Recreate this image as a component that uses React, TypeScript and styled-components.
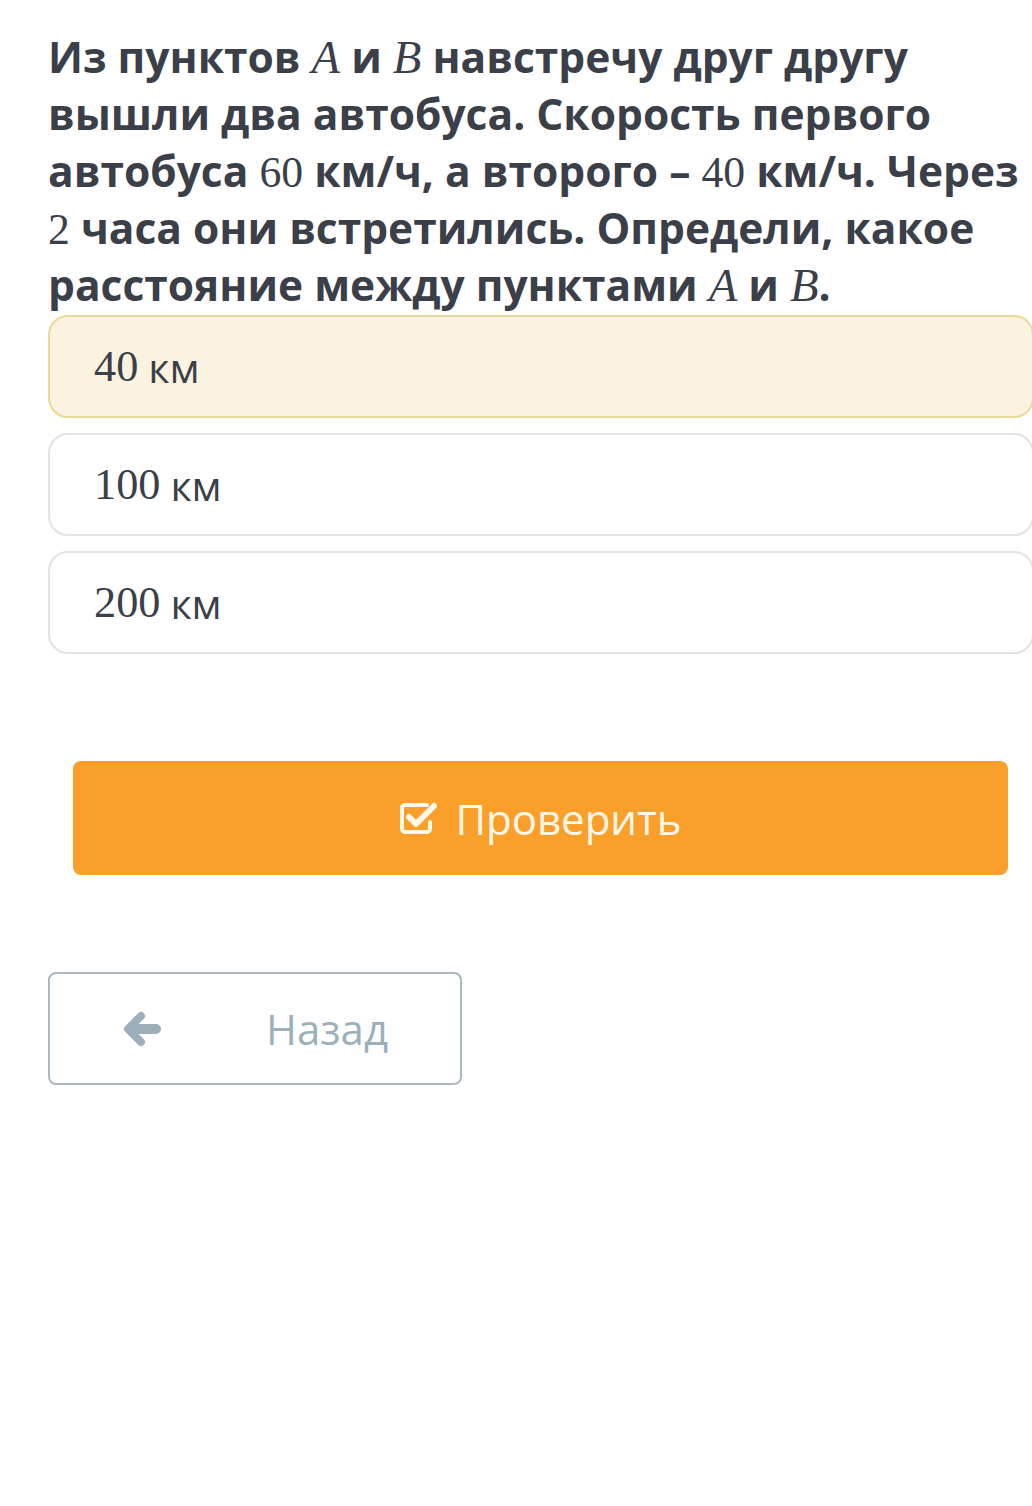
import React, { useState } from "react";
import styled, { createGlobalStyle } from "styled-components";

const GlobalStyle = createGlobalStyle`
  html, body {
    margin: 0;
    padding: 0;
    background: #ffffff;
    overflow-x: hidden;
  }
`;

const Page = styled.div`
  width: 1032px;
  min-height: 1506px;
  box-sizing: border-box;
  padding: 28px 0 0 48px;
  font-family: "Open Sans", "Noto Sans", sans-serif;
  color: #3a3f49;
`;

const Question = styled.div`
  width: 984px;
  font-size: 42.5px;
  font-weight: 700;
  line-height: 57px;
  margin: 0 0 2px 0;
`;

const M = styled.span`
  font-family: "Liberation Serif", "DejaVu Serif", serif;
  font-weight: 400;
  font-size: 1.03em;
  line-height: 1;
`;

const MI = styled(M)`
  font-style: italic;
  font-size: 1.1em;
`;

const Options = styled.div`
  display: flex;
  flex-direction: column;
  gap: 15px;
  width: 986px;
`;

const Option = styled.div<{ $active: boolean }>`
  height: 103px;
  box-sizing: border-box;
  display: flex;
  align-items: center;
  padding: 0 0 0 44px;
  border-radius: 20px;
  border: 2px solid ${(p) => (p.$active ? "#ecd99a" : "#e3e3e3")};
  background: ${(p) => (p.$active ? "#fbf2df" : "#ffffff")};
  font-size: 41px;
  color: #3a3f49;
  cursor: pointer;
`;

const OptionNum = styled.span`
  font-family: "Liberation Serif", "DejaVu Serif", serif;
  font-size: 1.08em;
  margin-right: 10px;
`;

const CheckButton = styled.button`
  margin: 107px 0 0 25px;
  width: 935px;
  height: 114px;
  border: none;
  border-radius: 8px;
  background: #fb9f2b;
  color: #fff8ea;
  font-family: "Open Sans", "Noto Sans", sans-serif;
  font-size: 42px;
  display: flex;
  align-items: center;
  justify-content: center;
  gap: 18px;
  padding: 0;
  cursor: pointer;
`;

const BackButton = styled.button`
  margin: 97px 0 0 0;
  width: 414px;
  height: 113px;
  box-sizing: border-box;
  border: 2px solid #abb8bf;
  border-radius: 8px;
  background: #ffffff;
  color: #9cb0bc;
  font-family: "Open Sans", "Noto Sans", sans-serif;
  font-size: 42px;
  display: flex;
  align-items: center;
  padding: 0 0 0 72px;
  cursor: pointer;
`;

const BackLabel = styled.span`
  margin-left: 104px;
`;

const CheckSquare = () => (
  <svg width="38" height="36" viewBox="0 0 38 36">
    <path
      d="M31 22v7a3 3 0 0 1-3 3H6a3 3 0 0 1-3-3V8a3 3 0 0 1 3-3h22"
      fill="none"
      stroke="#fff8ea"
      strokeWidth="4"
      strokeLinecap="round"
    />
    <path
      d="M10 17l7 7L35 6"
      fill="none"
      stroke="#fff8ea"
      strokeWidth="6"
      strokeLinecap="round"
      strokeLinejoin="round"
    />
  </svg>
);

const ArrowLeft = () => (
  <svg width="40" height="36" viewBox="0 0 40 36">
    <path
      d="M19 5L6 18l13 13"
      fill="none"
      stroke="#9cb0bc"
      strokeWidth="8"
      strokeLinecap="round"
      strokeLinejoin="round"
    />
    <path d="M8 18h26" stroke="#9cb0bc" strokeWidth="10" strokeLinecap="round" />
  </svg>
);

const answers = [
  { num: "40", unit: "км" },
  { num: "100", unit: "км" },
  { num: "200", unit: "км" },
];

export default function App() {
  const [selected, setSelected] = useState(0);

  return (
    <>
      <GlobalStyle />
      <Page>
        <Question>
          Из пунктов <MI>A</MI> и <MI>B</MI> навстречу друг другу вышли два
          автобуса. Скорость первого автобуса <M>60</M> км/ч, а второго –{" "}
          <M>40</M> км/ч. Через <M>2</M> часа они встретились. Определи, какое
          расстояние между пунктами <MI>A</MI> и <MI>B</MI>.
        </Question>
        <Options>
          {answers.map((a, i) => (
            <Option key={a.num} $active={selected === i} onClick={() => setSelected(i)}>
              <OptionNum>{a.num}</OptionNum>
              {a.unit}
            </Option>
          ))}
        </Options>
        <CheckButton>
          <CheckSquare />
          Проверить
        </CheckButton>
        <BackButton>
          <ArrowLeft />
          <BackLabel>Назад</BackLabel>
        </BackButton>
      </Page>
    </>
  );
}
